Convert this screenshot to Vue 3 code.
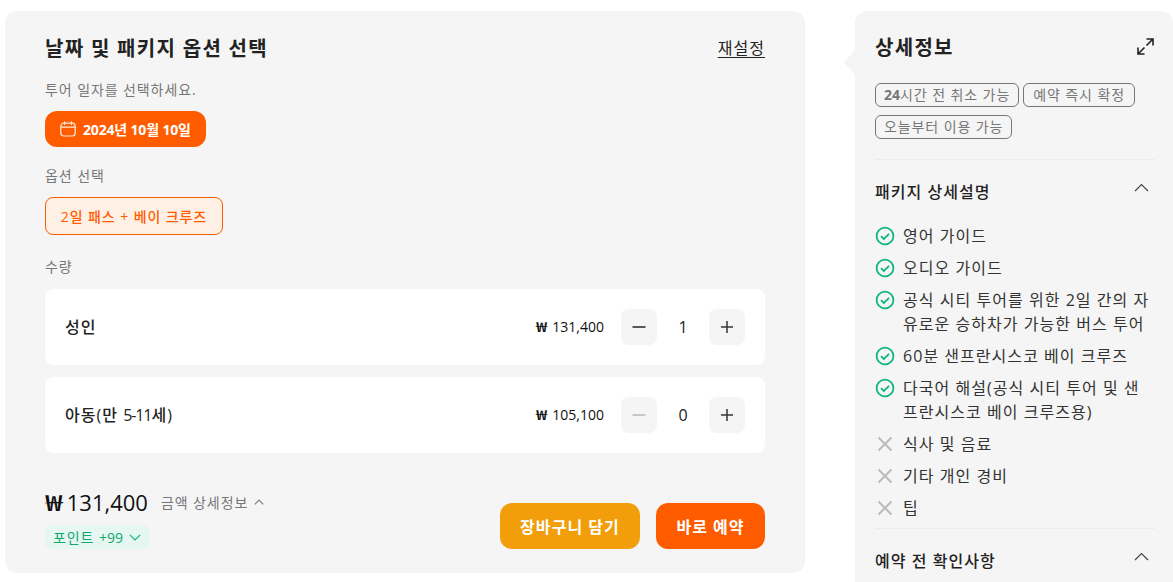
<script setup>
const rows = [
  { name: '성인', range: '', tail: '', price: '131,400', qty: 1, off: false },
  { name: '아동(만 ', range: '5-11', tail: '세)', price: '105,100', qty: 0, off: true }
]
const included = [
  '영어 가이드',
  '오디오 가이드',
  '공식 시티 투어를 위한 2일 간의 자유로운 승하차가 가능한 버스 투어',
  '60분 샌프란시스코 베이 크루즈',
  '다국어 해설(공식 시티 투어 및 샌프란시스코 베이 크루즈용)'
]
const excluded = ['식사 및 음료', '기타 개인 경비', '팁']
</script>

<template>
  <div class="page">
    <section class="main">
      <div class="head">
        <h2 class="title">날짜 및 패키지 옵션 선택</h2>
        <a class="reset">재설정</a>
      </div>

      <p class="label first">투어 일자를 선택하세요.</p>
      <button class="date">
        <svg width="16" height="16" viewBox="0 0 16 16" fill="none" stroke="#ffe9dc" stroke-width="1.2" stroke-linecap="round">
          <rect x="0.8" y="2.2" width="14.4" height="12.8" rx="3" />
          <path d="M0.8 6.2h14.4M4.6 0.8v2.6M11.4 0.8v2.6" />
        </svg>
        <span class="date-txt">2024년 10월 10일</span>
      </button>

      <p class="label second">옵션 선택</p>
      <button class="option">2일 패스 + 베이 크루즈</button>

      <p class="label third">수량</p>
      <div class="rows">
        <div v-for="r in rows" :key="r.name" class="row">
          <span class="name">{{ r.name }}<span class="range">{{ r.range }}</span>{{ r.tail }}</span>
          <span class="price num"><span class="won">₩</span> {{ r.price }}</span>
          <div class="stepper">
            <button class="step" :class="{ off: r.off }">
              <svg width="14" height="14" viewBox="0 0 14 14"><path d="M0.5 7h13" stroke="currentColor" stroke-width="1.6" /></svg>
            </button>
            <span class="qty num">{{ r.qty }}</span>
            <button class="step">
              <svg width="12" height="12" viewBox="0 0 12 12"><path d="M0 6h12M6 0v12" stroke="currentColor" stroke-width="1.5" /></svg>
            </button>
          </div>
        </div>
      </div>

      <div class="foot">
        <div class="sum">
          <div class="total">
            <strong class="num"><span class="won">₩</span> 131,400</strong>
            <span class="detail">금액 상세정보
              <svg width="10" height="6" viewBox="0 0 10 6" fill="none" stroke="#777" stroke-width="1.1"><path d="M0.8 5.3 5 1l4.2 4.3" /></svg>
            </span>
          </div>
          <span class="point"><span>포인트 <span class="num">+99</span></span>
            <svg width="12" height="7" viewBox="0 0 12 7" fill="none" stroke="#10b77f" stroke-width="1.2"><path d="M0.8 0.8 6 6l5.2-5.2" /></svg>
          </span>
        </div>
        <div class="actions">
          <button class="btn cart">장바구니 담기</button>
          <button class="btn book">바로 예약</button>
        </div>
      </div>
    </section>

    <aside class="side">
      <svg class="tail" width="12" height="40" viewBox="0 0 12 40"><path d="M12 0C12 8 8 12 1 19c-1 1-1 2 0 3 7 7 11 10 11 18z" fill="#f5f5f5" /></svg>
      <div class="side-head">
        <h3>상세정보</h3>
        <svg width="17" height="17" viewBox="0 0 17 17" fill="none" stroke="#222" stroke-width="1.6"><path d="M9.500 1h6.500v6.500M16 1 9.500 7.500M1 9.500V16h6.500M1 16l6.500-6.500" /></svg>
      </div>
      <div class="tags">
        <span class="tag"><b class="num">24</b>시간 전 취소 가능</span>
        <span class="tag wide">예약 즉시 확정</span>
        <span class="tag">오늘부터 이용 가능</span>
      </div>

      <div class="block">
        <div class="block-head">
          <h4>패키지 상세설명</h4>
          <svg width="15" height="9" viewBox="0 0 15 9" fill="none" stroke="#444" stroke-width="1.2"><path d="M1 8 7.500 1.500 14 8" /></svg>
        </div>
        <ul class="list">
          <li v-for="t in included" :key="t">
            <svg class="ico" width="20" height="20" viewBox="0 0 20 20" fill="none" stroke="#10b77f" stroke-width="1.8">
              <circle cx="10" cy="10" r="8.400" />
              <path d="m6 10.200 2.800 2.800L14 7.800" />
            </svg>
            <span class="txt">{{ t }}</span>
          </li>
          <li v-for="t in excluded" :key="t">
            <svg class="ico" width="20" height="20" viewBox="0 0 20 20" fill="none" stroke="#bbb" stroke-width="2">
              <path d="m3.500 3.500 13 13M16.500 3.500l-13 13" />
            </svg>
            <span class="txt">{{ t }}</span>
          </li>
        </ul>
      </div>

      <div class="block">
        <div class="block-head">
          <h4>예약 전 확인사항</h4>
          <svg width="15" height="9" viewBox="0 0 15 9" fill="none" stroke="#444" stroke-width="1.2"><path d="M1 8 7.500 1.500 14 8" /></svg>
        </div>
      </div>
    </aside>
  </div>
</template>

<style>
html, body { overflow: hidden; height: 100%; background: #fff; }
</style>

<style scoped>
.page {
  display: flex;
  gap: 50px;
  align-items: flex-start;
  height: 582px;
  overflow: hidden;
  box-sizing: border-box;
  padding: 11px 0 0 5px;
  font-family: "Open Sans", "Noto Sans CJK KR", sans-serif;
  color: #222;
}
/* 한글 폭 보정 */
.page * { letter-spacing: 0.065em; }
.page .num, .page .num * { letter-spacing: 0; }
.page .date-txt { letter-spacing: -0.012em; }
.page .range { letter-spacing: -0.07em; }
h2, h3, h4, p, ul { margin: 0; padding: 0; }
button { font-family: inherit; border: 0; padding: 0; cursor: pointer; }

.main {
  width: 800px;
  height: 562px;
  box-sizing: border-box;
  padding: 23px 40px 0;
  background: #f5f5f5;
  border-radius: 12px;
}
.head { display: flex; justify-content: space-between; align-items: center; height: 30px; }
.title { font-size: 20px; font-weight: 700; line-height: 30px; }
.reset { font-size: 16px; color: #222; text-decoration: underline; text-underline-offset: 3px; margin-bottom: 4px; }

.label { font-size: 14px; line-height: 20px; color: #777; }
.first { margin-top: 16px; }
.second { margin-top: 19px; }
.third { margin-top: 22px; }

.date {
  display: flex;
  align-items: center;
  gap: 7px;
  height: 36px;
  margin-top: 11px;
  padding: 0 15px;
  background: #ff5c00;
  color: #fff;
  font-size: 14px;
  font-weight: 700;
  border-radius: 12px;
}
.option {
  display: block;
  height: 38px;
  width: 178px;
  margin-top: 11px;
  background: #fff0e6;
  border: 1px solid #ff5c00;
  border-radius: 8px;
  color: #ff5c00;
  font-size: 14px;
  font-weight: 500;
}

.rows { display: flex; flex-direction: column; gap: 12px; margin-top: 12px; }
.row {
  display: flex;
  align-items: center;
  height: 76px;
  padding: 0 20px;
  background: #fff;
  border-radius: 8px;
}
.name { font-size: 16px; font-weight: 500; flex: 1; margin-bottom: 2px; }
.price { font-size: 14px; font-weight: 500; color: #111; margin-right: 17px; margin-bottom: 2px; }
.won { display: inline-block; transform: scaleX(1.4); transform-origin: left center; margin-right: 0.33em; }
.total .won { margin-right: 0.16em; }
.stepper { display: flex; align-items: center; }
.step {
  display: flex;
  align-items: center;
  justify-content: center;
  width: 36px;
  height: 36px;
  background: #f5f5f5;
  border-radius: 8px;
  color: #333;
}
.step.off { color: #bbb; }
.qty { width: 52px; text-align: center; font-size: 16px; font-weight: 500; }

.foot { display: flex; justify-content: space-between; align-items: flex-end; margin-top: 34px; }
.total { display: flex; align-items: center; gap: 13px; }
.total strong { font-size: 22px; font-weight: 500; color: #111; line-height: 30px; }
.detail { display: inline-flex; align-items: center; gap: 6px; font-size: 14px; color: #777; }
.point {
  display: inline-flex;
  align-items: center;
  gap: 6px;
  height: 24px;
  margin-top: 8px;
  padding: 0 8px;
  background: #e6f6f0;
  border-radius: 6px;
  color: #10a870;
  font-size: 14px;
}
.actions { display: flex; gap: 16px; }
.btn {
  height: 46px;
  width: 140px;
  color: #fff;
  font-size: 16px;
  font-weight: 700;
  border-radius: 12px;
}
.cart { background: #f29d0a; }
.book { width: 109px; background: #ff5c00; }

.side {
  position: relative;
  flex: none;
  width: 318px;
  box-sizing: border-box;
  padding: 19px 18px 30px 20px;
  background: #f5f5f5;
  border-radius: 12px;
}
.tail { position: absolute; left: -11px; top: 31px; }
.side-head { display: flex; justify-content: space-between; align-items: center; padding-right: 1px; height: 32px; }
.side-head h3 { font-size: 20px; font-weight: 700; }
.tags { display: flex; flex-wrap: wrap; gap: 8px 4px; margin-top: 21px; }
.tag {
  height: 24px;
  line-height: 22px;
  box-sizing: border-box;
  padding: 0 8px;
  border: 1px solid #777;
  border-radius: 6px;
  font-size: 14px;
  color: #777;
}
.tag.wide { padding: 0 9px; }
.tag b { font-weight: 700; }
.block { border-top: 1px solid #ececec; margin-top: 20px; }
.block + .block { margin-top: 8px; }
.block-head { display: flex; justify-content: space-between; align-items: center; height: 62px; padding-right: 6px; margin-bottom: 2px; }
.block-head svg { margin-bottom: 8px; }
.block-head h4 { font-size: 16px; font-weight: 500; }
.list { list-style: none; display: flex; flex-direction: column; gap: 8px; }
.list li { display: flex; gap: 8px; font-size: 16px; line-height: 24px; color: #333; }
.txt { max-width: 250px; word-break: break-all; }
.ico { flex: none; margin-top: 2px; }
</style>
